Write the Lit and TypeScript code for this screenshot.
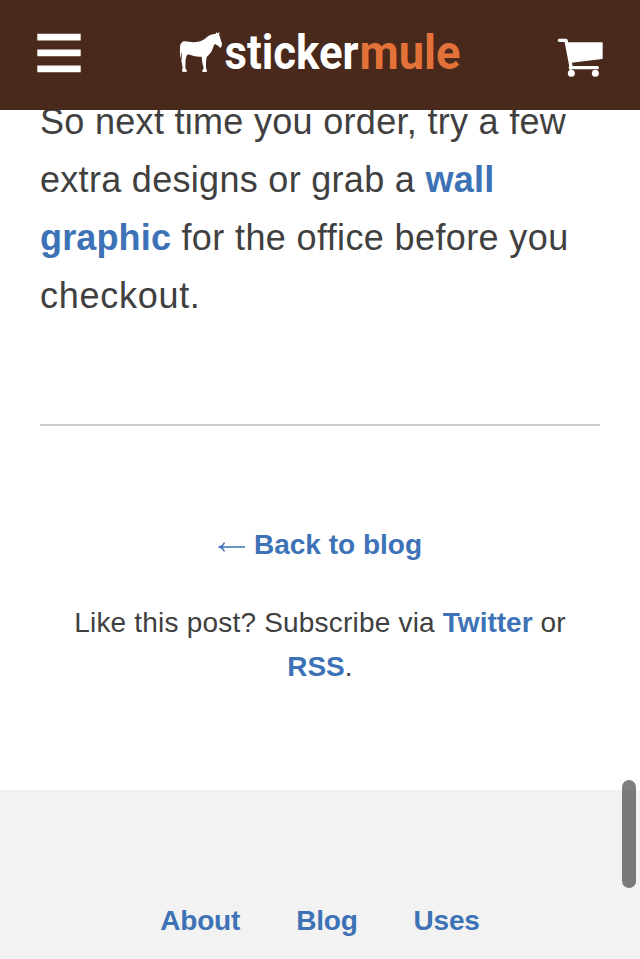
import { LitElement, html, css } from "lit";
import { customElement } from "lit/decorators.js";

@customElement("site-header")
class SiteHeader extends LitElement {
  static styles = css`
    :host { display: block; }
    .bar { height: 110px; background: #48291b; display: grid; grid-template-columns: 180px 1fr 180px; }
    svg { display: block; }
    .logo { font: 700 48px Roboto, "Liberation Sans", sans-serif; }
    .right { justify-self: end; }
  `;
  render() {
    return html`<header class="bar">
      <svg width="180" height="110" aria-label="Menu">
        <path fill="#fff" d="M37.3 33.7h43.4v6.8H37.3zM37.3 49.5h43.4v6.8H37.3zM37.3 65.4h43.4v6.8H37.3z" />
      </svg>
      <svg class="logo" width="280" height="110" viewBox="180 0 280 110" overflow="visible">
        <g transform="translate(176 28) scale(.33333)">
          <path fill="#fff" d="M12 66 Q10 46 20 41 C31 37 42 45 60 42 C78 41 86 33 96 25 C104 18 113 19 120 17 L120 13 L125 16 L130 12 L130 22 L138 47 Q139 57 133 60 L127 54 L118 48 Q113 50 111 60 C107 72 101 79 92 87 L90 101 L90 119 L93 129 L92 132 L79 132 L79 127 L83 121 L79 104 L77 86 C63 88 49 83 36 79 Q29 84 29 94 L28 120 L33 128 L32 131 L20 132 L18 126 L20 120 L16 98 L18 78 L16 73 L15 91 Q11 83 12 66Z" />
        </g>
        <text x="224.500" y="69" fill="#fff" textLength="134" lengthAdjust="spacingAndGlyphs">sticker</text>
        <text x="359.500" y="69" fill="#e27238" textLength="101" lengthAdjust="spacingAndGlyphs">mule</text>
      </svg>
      <svg class="right" width="180" height="110" viewBox="460 0 180 110" aria-label="Cart">
        <g transform="translate(545 25) scale(.33333)" fill="none" stroke="#fff" stroke-linecap="round" stroke-linejoin="round">
          <path d="M43 46H63L77 119V130" stroke-width="10" />
          <path fill="#fff" stroke-width="4" d="M68 54H171V100L80 111Z" />
          <path d="M76 128H157" stroke-width="10" />
          <circle cx="79" cy="145" r="10.500" fill="#fff" stroke="none" /><circle cx="151" cy="145" r="10.500" fill="#fff" stroke="none" />
        </g>
      </svg>
    </header>`;
  }
}

@customElement("app-root")
class AppRoot extends LitElement {
  static styles = css`
    :host { display: block; position: relative; height: 959px; overflow: hidden; background: #fff; color: #404040; font-family: "Liberation Sans", Arial, sans-serif; }
    a { color: #3d73b6; font-weight: 700; text-decoration: none; }
    site-header { position: relative; z-index: 1; }
    .post { margin: -17px 40px 0; height: 331px; border-bottom: 2px solid #cbcbcb; font-size: 36px; line-height: 58px; white-space: nowrap; }
    .post p { margin: 0; }
    .line { display: block; letter-spacing: .3px; }
    .line:nth-child(3) { letter-spacing: .38px; }
    .line:nth-child(3) a { letter-spacing: .15px; }
    .line:nth-child(4) { letter-spacing: .72px; }
    .follow { height: 364px; font-size: 28px; line-height: 44px; text-align: center; }
    .follow p { margin: 0; padding-top: 34px; letter-spacing: .2px; }
    .follow p a { letter-spacing: 0; }
    .back { padding-top: 97px; }
    .arrow { display: inline-block; vertical-align: 0; margin-right: 8px; }
    footer { background: #f2f2f2; height: 169px; font-size: 28px; line-height: 44px; letter-spacing: -.2px; }
    nav { display: flex; justify-content: center; gap: 56px; padding-top: 109px; }
    .thumb { position: absolute; left: 622px; top: 780px; width: 14px; height: 108px; border-radius: 7px; background: rgba(0,0,0,.5); }
  `;
  render() {
    return html`
      <site-header></site-header>
      <main>
        <article class="post"><p>
          <span class="line">So next time you order, try a few</span>
          <span class="line">extra designs or grab a <a href="#">wall</a></span>
          <span class="line"><a href="#">graphic</a> for the office before you</span>
          <span class="line">checkout.</span>
        </p></article>
        <section class="follow">
          <div class="back"><a href="#"><svg class="arrow" width="28" height="14" viewBox="0 0 28 14" fill="none" stroke="currentColor" stroke-width="1.4"><path d="M2 7H27M6.500 2.500Q5 6 1.500 7Q5 8 6.500 11.500" /></svg>Back to blog</a></div>
          <p>Like this post? Subscribe via <a href="#">Twitter</a> or<br /><a href="#">RSS</a>.</p>
        </section>
      </main>
      <footer><nav><a href="#">About</a><a href="#">Blog</a><a href="#">Uses</a></nav></footer>
      <div class="thumb"></div>`;
  }
}
